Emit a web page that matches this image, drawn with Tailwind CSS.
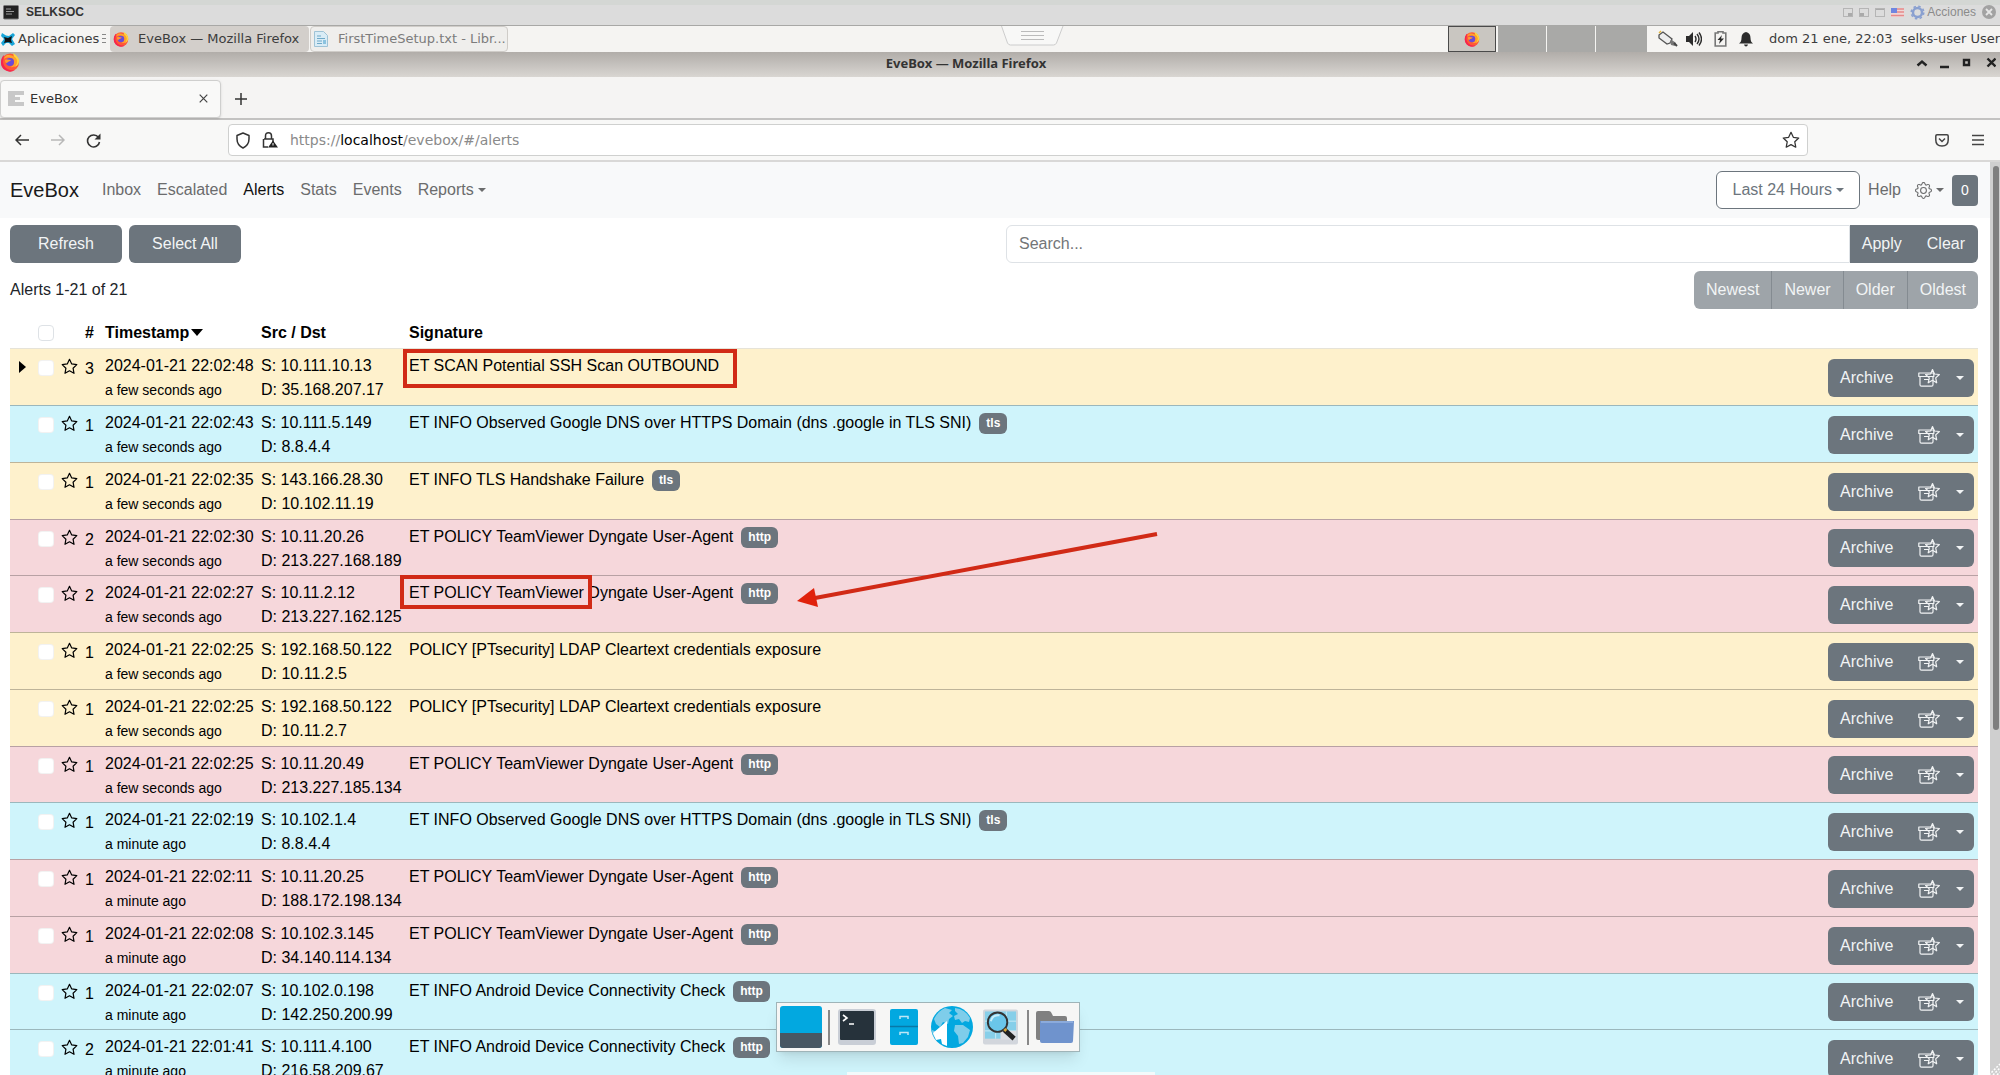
<!DOCTYPE html>
<html lang="es">
<head>
<meta charset="utf-8">
<title>SELKSOC</title>
<script src="https://cdn.jsdelivr.net/npm/@tailwindcss/browser@4"></script>
</head>
<body class="relative h-screen overflow-hidden flex flex-col bg-white font-['Liberation_Sans',sans-serif] text-base text-[#212529]">

<!-- shared icon symbols -->
<svg class="hidden">
  <symbol id="firefox" viewBox="0 0 20 20">
    <circle cx="10" cy="10.500" r="9" fill="#ff5a36"/>
    <path d="M1 10a9 9 0 0 0 14 8c-5 1-11-1-12-8L4 3C2 5 1 7 1 10z" fill="#f5254f"/>
    <path d="M13 1c1 2 0 3 2 5 2 2 2 7-1 9 4-1 5.500-4 5-7-.5-3-3-5-6-7z" fill="#ffd53d"/>
    <path d="M7 3c-2 1-3 3-3 4 2-2 6-2 9 0 2 3 1 7-3 8 5 1 8-3 7-7-1-3-4-5-10-5z" fill="#ffa32b"/>
    <circle cx="10" cy="10" r="4" fill="#6a4bd8"/>
    <path d="M5 8c2-1 4 0 6 0-1 2-3 1-4 3-2 0-2-2-2-3z" fill="#ff9a2e"/>
  </symbol>
  <symbol id="star" viewBox="0 0 20 20"><path d="M10 1.500l2.600 5.500 6 .8-4.400 4.200 1.100 6-5.300-2.900L4.700 18l1.100-6L1.400 7.800l6-.8z" fill="none" stroke="currentColor" stroke-width="1.400" stroke-linejoin="round"/></symbol>
  <symbol id="archive-star" viewBox="0 0 22 20">
    <g fill="none" stroke="currentColor" stroke-width="1.200" stroke-linejoin="round">
      <path d="M.8 5h15v3.500H.8zM2 8.500v8.200q0 1.500 1.500 1.500h10q1.500 0 1.500-1.500V8.500M6 11.500h5"/>
      <path d="M14.500 1.500l1.900 4.500 5 .5-3.700 3.400 1 4.900-4.200-2.500-4.300 2.500 1.100-4.900L7.600 6.500l5-.5z"/>
    </g>
  </symbol>
</svg>

<!-- virtual machine bar -->
<header class="flex h-[26px] shrink-0 items-end justify-between border-b border-t-[5px] border-t-[#d4d7d4] border-b-[#a8a8a6] bg-[#dcdcdc] pl-[3px] pr-1">
  <div class="flex h-5 items-start gap-[7px]">
    <svg class="h-[15px] w-4" viewBox="0 0 16 15"><rect x=".5" y=".5" width="15" height="13.500" rx="1" fill="#222" stroke="#777"/><path d="M3 4h5M3 6.500h8M3 9h6" stroke="#999"/></svg>
    <span class="text-xs leading-[14px] font-bold text-[#333]">SELKSOC</span>
  </div>
  <div class="flex h-5 items-start gap-[6px] text-[#8b8b8b]">
    <svg class="mt-[3px] h-[9px] w-[10px]" viewBox="0 0 10 9"><rect x=".5" y=".5" width="9" height="8" fill="none" stroke="#b5b5b5"/><path d="M5 5h4v3H5z" fill="#aaa"/></svg>
    <svg class="mt-[3px] h-[9px] w-[10px]" viewBox="0 0 10 9"><rect x=".5" y=".5" width="9" height="8" fill="none" stroke="#b5b5b5"/><path d="M1 5h4v3H1z" fill="#aaa"/></svg>
    <svg class="mt-[3px] h-[9px] w-[10px]" viewBox="0 0 10 9"><rect x=".5" y=".5" width="9" height="8" fill="none" stroke="#b5b5b5"/><path d="M1 1h8v1H1z" fill="#aaa"/></svg>
    <svg class="mt-[3px] h-[9px] w-[13px]" viewBox="0 0 13 9"><path d="M0 0h13v9H0z" fill="#f0d6d6"/><path d="M0 1h13M0 4h13M0 7.500h13" stroke="#e58a8a" stroke-width="1.300"/><path d="M0 0h6v5H0z" fill="#6f86e0"/></svg>
    <svg class="h-[15px] w-[15px]" viewBox="0 0 15 15"><circle cx="7.500" cy="7.500" r="4.500" fill="none" stroke="#8aa0d0" stroke-width="2.500"/><circle cx="7.500" cy="7.500" r="6.300" fill="none" stroke="#8aa0d0" stroke-width="1.500" stroke-dasharray="2.500 2.450"/></svg>
    <button class="-ml-1 text-xs leading-[15px]">Acciones</button>
    <svg class="h-[14px] w-[14px]" viewBox="0 0 14 14"><circle cx="7" cy="7" r="7" fill="#a2a2a2"/><path d="M4 4l6 6M10 4l-6 6" stroke="#e6e6e6" stroke-width="1.800"/></svg>
  </div>
</header>

<!-- desktop panel -->
<div class="relative flex h-[26px] shrink-0 items-stretch bg-[#f5f4f2] font-['DejaVu_Sans',sans-serif] text-[13px] text-[#3c3c3c]">
  <button class="flex w-[110px] items-center gap-[3px] pl-px">
    <svg class="h-[15px] w-[14px] shrink-0" viewBox="0 0 14 15"><path d="M1 1l4 2.500 3 .5 4-3 2 2-3 4 3 5-3 2-3-3H5l-3 3-2-3 3-4L0 4z" fill="#18a5d8"/><path d="M3 5l4 1 4-2-1 4 1 3-4-1-4 1 1-3z" fill="#111"/></svg>
    <span>Aplicaciones</span>
    <svg class="h-[10px] w-1 shrink-0" viewBox="0 0 4 10"><path d="M0 .5h4M0 4.500h4M0 8.500h4" stroke="#888"/></svg>
  </button>
  <button class="flex w-[199px] items-center gap-[9px] rounded bg-[#d3cfcb] pl-[3px] whitespace-nowrap"><svg class="h-4 w-4 shrink-0"><use href="#firefox"/></svg>EveBox — Mozilla Firefox</button>
  <button class="ml-px flex w-[198px] items-center gap-[10px] rounded border border-[#cfccc8] bg-[#efeeec] pl-[3px] whitespace-nowrap text-[#7c7c7c]">
    <svg class="h-4 w-[14px] shrink-0" viewBox="0 0 14 16"><path d="M.5.5h9l4 4v11H.5z" fill="#d9ecf6" stroke="#9fc3d6"/><path d="M3 5h4M3 7.500h8M3 10h5M3 12.500h5" stroke="#6fa9c8"/><path d="M9 9h3v4H9z" fill="#8cc3df"/></svg>
    FirstTimeSetup.txt - Libr...</button>
  <svg class="absolute left-[1001px] top-0 h-5 w-[63px]" viewBox="0 0 63 20"><path d="M.5 0l6 17q1 2 3 2h43q2 0 3-2l6.500-17" fill="#f8f8f7" stroke="#ccc"/><path d="M20 5.500h23M20 9.500h23M20 13.500h23" stroke="#bbb"/></svg>
  <div class="ml-auto flex">
    <div class="flex w-12 items-center justify-center border border-[#4a4a4a] bg-[#c9c6c1]"><svg class="h-4 w-4"><use href="#firefox"/></svg></div>
    <div class="ml-0.5 w-12 bg-[#a9a9a7]"></div>
    <div class="ml-px w-12 bg-[#a9a9a7]"></div>
    <div class="ml-px w-[51px] bg-[#a9a9a7]"></div>
    <div class="flex w-[353px] items-center whitespace-nowrap pl-[10px]">
      <svg class="h-[18px] w-[21px] shrink-0" viewBox="0 0 21 18"><path d="M2 5l4-3 9 7-2 4-3 1-8-6z" fill="#eee" stroke="#555" stroke-width="1.300"/><path d="M13 11l2-1 4 3-1 3-4-1z" fill="#777"/><path d="M2 3l2-2" stroke="#e5b83c" stroke-width="1.500"/><path d="M17 13l3 3" stroke="#444" stroke-width="2"/></svg>
      <svg class="ml-2 h-4 w-4 shrink-0" viewBox="0 0 16 16"><path d="M0 5h3l4-4v14l-4-4H0z" fill="#2c2c2c"/><path d="M9 5q2 3 0 6M11 3q4 5 0 10M13 1.500q5 6.500 0 13" fill="none" stroke="#2c2c2c" stroke-width="1.400"/></svg>
      <svg class="ml-3 h-4 w-[13px] shrink-0" viewBox="0 0 13 16"><path d="M4 2V.8h5V2h2.800v13H1.200V2z" fill="none" stroke="#777" stroke-width="1.600"/><path d="M8 4L3.500 9H6l-1 4 5-5.500H7z" fill="#2c2c2c"/></svg>
      <svg class="ml-3 h-4 w-[14px] shrink-0" viewBox="0 0 14 16"><path d="M7 1q4.500 1 4.500 6 0 4 2.500 5.500H0Q2.500 11 2.500 7 2.500 2 7 1zM5 13.500h4q-.5 2-2 2t-2-2z" fill="#2c2c2c"/></svg>
      <span class="ml-4">dom 21 ene, 22:03</span><span class="ml-2">selks-user User</span>
    </div>
  </div>
</div>

<!-- window title bar -->
<div class="relative flex h-[25px] shrink-0 items-start bg-linear-to-b from-[#b1ada9] to-[#d9d6d2]">
  <svg class="h-5 w-5 shrink-0"><use href="#firefox"/></svg>
  <div class="-ml-5 flex-1 pr-[68px] text-center font-['Noto_Sans',sans-serif] text-[13px] leading-[22px] font-bold text-[#333]">EveBox — Mozilla Firefox</div>
  <svg class="absolute right-1 top-[5px] h-3 w-20" viewBox="0 0 80 12"><g fill="none" stroke="#222" stroke-width="2.400"><path d="M1.500 8.500l4.500-4 4.500 4M24 10h9M48 3h5v5h-5zM71.500 1.500l8 8M79.500 1.500l-8 8"/></g></svg>
</div>

<!-- browser tabs -->
<div class="flex h-[43px] shrink-0 items-center border-b-2 border-[#c3c2c1] bg-[#f5f4f3] pt-[2px] font-['DejaVu_Sans',sans-serif] text-[13px] text-[#333]">
  <div class="flex h-[38px] w-[221px] items-center rounded-sm border border-[#cfcfce] bg-[#f9f9f8] pl-[7px] pr-3 shadow-sm">
    <svg class="h-[15px] w-4" viewBox="0 0 16 15"><path d="M0 0h16v4H7v2h5v3H7v2h9v4H0z" fill="#c8c8c8"/></svg>
    <span class="ml-[6px]">EveBox</span>
    <button class="ml-auto" aria-label="Close tab"><svg class="h-[9px] w-[9px]" viewBox="0 0 9 9"><path d="M.7.7l7.600 7.600M8.300.7L.7 8.300" stroke="#444" stroke-width="1.200"/></svg></button>
  </div>
  <button class="ml-[14px]" aria-label="New tab"><svg class="h-3 w-3" viewBox="0 0 12 12"><path d="M6 0v12M0 6h12" stroke="#333" stroke-width="1.500"/></svg></button>
</div>

<!-- browser toolbar -->
<div class="flex h-[42px] shrink-0 items-center border-b-2 border-[#d9d8d7] bg-[#f8f8f7] px-4 pl-[15px] text-[#333]">
  <button aria-label="Back"><svg class="h-3 w-[14px]" viewBox="0 0 14 12"><path d="M14 6H1M6 1L1 6l5 5" fill="none" stroke="currentColor" stroke-width="1.500"/></svg></button>
  <button class="ml-[22px] text-[#b8b8b8]" aria-label="Forward"><svg class="h-3 w-[14px]" viewBox="0 0 14 12"><path d="M0 6h13M8 1l5 5-5 5" fill="none" stroke="currentColor" stroke-width="1.500"/></svg></button>
  <button class="ml-[21px]" aria-label="Reload"><svg class="h-[15px] w-[15px]" viewBox="0 0 15 15"><path d="M12.500 4.500A6 6 0 1 0 13.500 9" fill="none" stroke="currentColor" stroke-width="1.600"/><path d="M14.500.5v6h-6z" fill="currentColor"/></svg></button>
  <div class="ml-[127px] mr-[127px] flex h-8 flex-1 items-center rounded border border-[#cfd0cf] bg-white px-[7px]">
    <svg class="h-[17px] w-[14px] shrink-0" viewBox="0 0 14 17"><path d="M7 1l6 2.500v3.500q0 6-6 9-6-3-6-9V3.500z" fill="none" stroke="#333" stroke-width="1.500" stroke-linejoin="round"/></svg>
    <svg class="ml-3 h-4 w-4 shrink-0" viewBox="0 0 16 16"><path d="M2 7h9v3M6 15H1.500V7M3.500 7V4q0-3.200 3-3.200T9.500 4v3" fill="none" stroke="#333" stroke-width="1.500"/><path d="M11 8.500l5 7H6z" fill="#222"/><path d="M11 11v2.500" stroke="#fff"/></svg>
    <div role="textbox" aria-label="Address" contenteditable="true" spellcheck="false" class="ml-3 flex-1 font-['DejaVu_Sans',sans-serif] text-sm text-[#8a8a8a]">https://<span class="text-black">localhost</span>/evebox/#/alerts</div>
    <button aria-label="Bookmark"><svg class="block h-[18px] w-[18px]"><use href="#star"/></svg></button>
  </div>
  <button aria-label="Pocket"><svg class="h-[13px] w-[14px]" viewBox="0 0 14 13"><path d="M2 .8h10q1.200 0 1.200 1.200v4q0 6-6.200 6T.8 6V2Q.8.8 2 .8zM4 4.500l3 3 3-3" fill="none" stroke="#444" stroke-width="1.500"/></svg></button>
  <button class="ml-[23px]" aria-label="Menu"><svg class="h-3 w-3" viewBox="0 0 12 12"><path d="M0 1.500h12M0 6h12M0 10.500h12" stroke="#444" stroke-width="1.400"/></svg></button>
</div>

<!-- page -->
<div class="flex min-h-0 flex-1 overflow-hidden">
  <div class="min-w-0 flex-1">
    <nav class="flex h-14 items-center gap-4 bg-[#f8f9fa] px-[10px] pr-3 text-[#6b6c6d]">
      <a href="#" class="mr-[7px] text-xl text-[#1a1a1a]">EveBox</a>
      <a href="#">Inbox</a>
      <a href="#">Escalated</a>
      <a href="#" class="text-[#111]">Alerts</a>
      <a href="#">Stats</a>
      <a href="#">Events</a>
      <a href="#" class="flex items-center gap-1">Reports<span class="border-x-4 border-t-4 border-x-transparent border-t-current"></span></a>
      <div class="ml-auto flex items-center">
        <button class="flex h-[38px] items-center gap-1 rounded-md border border-[#6c757d] bg-white px-[15px] text-[#6c757d]">Last 24 Hours<span class="border-x-4 border-t-4 border-x-transparent border-t-current"></span></button>
        <a href="#" class="ml-2">Help</a>
        <button class="ml-[14px] flex items-center gap-1" aria-label="Settings">
          <svg class="h-[17px] w-[17px]" viewBox="0 0 16 16" fill="#6b6c6d"><path d="M8 4.754a3.246 3.246 0 1 0 0 6.492 3.246 3.246 0 0 0 0-6.492zM5.754 8a2.246 2.246 0 1 1 4.492 0 2.246 2.246 0 0 1-4.492 0z"/><path d="M9.796 1.343c-.527-1.790-3.065-1.790-3.592 0l-.094.319a.873.873 0 0 1-1.255.52l-.292-.16c-1.640-.892-3.433.902-2.540 2.541l.159.292a.873.873 0 0 1-.52 1.255l-.319.094c-1.790.527-1.790 3.065 0 3.592l.319.094a.873.873 0 0 1 .52 1.255l-.16.292c-.892 1.640.901 3.434 2.541 2.540l.292-.159a.873.873 0 0 1 1.255.52l.094.319c.527 1.790 3.065 1.790 3.592 0l.094-.319a.873.873 0 0 1 1.255-.52l.292.16c1.640.893 3.434-.902 2.540-2.541l-.159-.292a.873.873 0 0 1 .52-1.255l.319-.094c1.790-.527 1.790-3.065 0-3.592l-.319-.094a.873.873 0 0 1-.52-1.255l.16-.292c.893-1.640-.902-3.433-2.541-2.540l-.292.159a.873.873 0 0 1-1.255-.52l-.094-.319zm-2.633.283c.246-.835 1.428-.835 1.674 0l.094.319a1.873 1.873 0 0 0 2.693 1.115l.291-.16c.764-.415 1.600.42 1.184 1.185l-.159.292a1.873 1.873 0 0 0 1.116 2.692l.318.094c.835.246.835 1.428 0 1.674l-.319.094a1.873 1.873 0 0 0-1.115 2.693l.16.291c.415.764-.42 1.600-1.185 1.184l-.291-.159a1.873 1.873 0 0 0-2.693 1.116l-.094.318c-.246.835-1.428.835-1.674 0l-.094-.319a1.873 1.873 0 0 0-2.692-1.115l-.292.16c-.764.415-1.600-.42-1.184-1.185l.159-.291A1.873 1.873 0 0 0 1.945 8.930l-.319-.094c-.835-.246-.835-1.428 0-1.674l.319-.094A1.873 1.873 0 0 0 3.060 4.377l-.16-.292c-.415-.764.42-1.600 1.185-1.184l.292.159a1.873 1.873 0 0 0 2.692-1.115l.094-.319z"/></svg>
          <span class="border-x-4 border-t-4 border-x-transparent border-t-current"></span>
        </button>
        <button class="ml-2 h-[31px] w-[26px] rounded bg-[#6c757d] text-sm text-white">0</button>
      </div>
    </nav>

    <main class="pl-[10px] pr-3 pt-[7px]">
      <div class="flex gap-2">
        <div class="flex flex-1 gap-[7px]">
          <button class="h-[38px] w-28 rounded-md bg-[#6c757d] text-[#f2f4f5]">Refresh</button>
          <button class="h-[38px] w-28 rounded-md bg-[#6c757d] text-[#f2f4f5]">Select All</button>
        </div>
        <form class="flex w-[972px]">
          <input type="text" aria-label="Search" placeholder="Search..." class="h-[38px] min-w-0 flex-1 rounded-l-md border border-[#dee2e6] bg-white px-3 placeholder:text-[#737578]">
          <button type="button" class="bg-[#6c757d] px-3 text-[#f2f4f5]">Apply</button>
          <button type="button" class="rounded-r-md bg-[#6c757d] px-[13px] text-[#f2f4f5]">Clear</button>
        </form>
      </div>
      <div class="mt-2 flex items-center justify-between">
        <span>Alerts 1-21 of 21</span>
        <div class="flex h-[38px] divide-x divide-[#848b91] overflow-hidden rounded-md bg-[#9ea4a9] text-[#f2f4f5]">
          <button class="px-3">Newest</button><button class="px-3">Newer</button><button class="px-3">Older</button><button class="px-3">Oldest</button>
        </div>
      </div>

      <table class="mt-[7px] w-full table-fixed border-collapse text-black">
        <colgroup><col class="w-6"><col class="w-[23px]"><col class="w-6"><col class="w-5"><col class="w-[156px]"><col class="w-[148px]"><col><col class="w-[154px]"></colgroup>
        <thead>
          <tr class="h-8 border-b border-[#e6e3d8] text-left leading-6">
            <th></th>
            <th class="px-1 pt-0.5"><input type="checkbox" aria-label="Select all alerts" class="block h-4 w-4 appearance-none rounded border border-[#dee2e6] bg-white"></th>
            <th></th><th class="pl-1 pt-0.5">#</th>
            <th class="px-1 pt-0.5"><div class="flex items-center gap-[2px]">Timestamp<span class="border-x-[6px] border-t-[7px] border-x-transparent border-t-black"></span></div></th>
            <th class="px-1 pt-0.5">Src / Dst</th><th class="px-1 pt-0.5">Signature</th><th></th>
          </tr>
        </thead>
        <tbody id="alerts"></tbody>
      </table>
    </main>
  </div>
  <div class="w-[10px] bg-[#cfcfcf] pl-[3px] pt-1"><div class="h-[62%] w-[6px] rounded-full bg-[#7f7f7f]"></div></div>
</div>

<!-- annotations drawn over the page -->
<div class="absolute left-[403px] top-[349px] h-[39px] w-[334px] border-4 border-[#d12a16]"></div>
<div class="absolute left-[400px] top-[575px] h-[34px] w-[192px] border-4 border-[#d12a16]"></div>
<svg class="absolute left-[797px] top-[530px] h-20 w-[364px]" viewBox="0 0 364 80"><path d="M360 4L18 68" stroke="#d12a16" stroke-width="4"/><path d="M0 71l17-13 4 19z" fill="#e0220c"/></svg>

<!-- window resize grip -->
<svg class="absolute bottom-0 right-0 h-3 w-3" viewBox="0 0 12 12"><path d="M1 12L12 1M5 12l7-7M9 12l3-3" stroke="#fff" stroke-width="1.500" stroke-dasharray="2 1.500"/></svg>

<!-- dock -->
<div class="absolute left-[776px] top-[1002px] flex h-[50px] w-[304px] items-center border border-[#9fb4b8] bg-[#f6f6f5] pl-[3px] shadow-lg">
  <svg class="h-[42px] w-[42px]" viewBox="0 0 42 42"><rect width="42" height="42" rx="3" fill="#02a8e0"/><path d="M0 27h42v12q0 3-3 3H3q-3 0-3-3z" fill="#485763"/></svg>
  <div class="ml-[6px] h-[35px] w-[2px] bg-[#888]"></div>
  <svg class="ml-2 h-9 w-[38px]" viewBox="0 0 38 36"><rect width="38" height="36" rx="3" fill="#c9ced6"/><rect x="2" y="2" width="34" height="29" rx="1" fill="#26323b"/><path d="M5 6l4 3-4 3M11 15h5" fill="none" stroke="#fff" stroke-width="1.600"/></svg>
  <svg class="ml-[14px] h-9 w-7" viewBox="0 0 28 36"><rect width="28" height="36" rx="2" fill="#02a8e0"/><path d="M0 17.500h28" stroke="#0879a8" stroke-width="1.500"/><path d="M10 10V7.500h8V10M10 26v-2.500h8V26" fill="none" stroke="#bfe6f5" stroke-width="1.500"/></svg>
  <svg class="ml-[13px] h-[42px] w-[42px]" viewBox="0 0 42 42"><circle cx="21" cy="21" r="21" fill="#02a8e0"/><path d="M3 13Q7 5 14 2l7 2-3 3 4 3-4 3-1 5-5-2-3 5-4-3zM24 2q10 1 15 10l-1 4-4-1-3 2-3-4-4 1-1-4 4-2-3-3zM24 19l8 0 7 5-2 7-5 6-4 1-1-8-4-5z" fill="#7ecdea"/><path d="M1 24l5 2 1 6-2 1Q1 29 1 24z" fill="#7ecdea"/><path d="M16 15v25l-5-2-1-5-5 1-3-7z" fill="#fff"/></svg>
  <svg class="ml-[10px] h-9 w-[35px]" viewBox="0 0 36 36"><rect width="36" height="36" rx="2" fill="#d2d6dc"/><rect x="2" y="2" width="32" height="28" fill="#87cfe9"/><path d="M2 12h32M2 22h32M13 2v28M24 2v28" stroke="#c8eaf6"/><path d="M18 22h16v9H18z" fill="#dcdfe3"/><circle cx="15" cy="13" r="10" fill="#6ac6ea" stroke="#333" stroke-width="2"/><path d="M8 12q2-7 9-6" fill="none" stroke="#c7edfa" stroke-width="2"/><path d="M22 21l10 9" stroke="#222" stroke-width="5"/><path d="M22 20l2 2" stroke="#d6a63c" stroke-width="3"/></svg>
  <div class="ml-[9px] h-[35px] w-[2px] bg-[#888]"></div>
  <svg class="ml-[7px] h-8 w-[38px]" viewBox="0 0 38 32"><path d="M0 2q0-2 2-2h11q2 0 3 3l1 2h12q2 0 2 2v22H2q-2 0-2-2z" fill="#808080"/><path d="M4 10h34l-1 20q0 2-2 2H6q-2 0-2-2z" fill="#6f93cd"/><path d="M5 11h32" stroke="#a8c2ea"/></svg>
</div>
<div class="absolute bottom-0 left-[847px] h-[3px] w-[308px] bg-[#f3fafb]"></div>

<script>
  const few = 'a few seconds ago', minute = 'a minute ago';
  const tv = 'ET POLICY TeamViewer Dyngate User-Agent';
  const dns = 'ET INFO Observed Google DNS over HTTPS Domain (dns .google in TLS SNI)';
  const ldap = 'POLICY [PTsecurity] LDAP Cleartext credentials exposure';
  const android = 'ET INFO Android Device Connectivity Check';
  const colors = { y: 'bg-[#fef1cc]', c: 'bg-[#cff4fb]', p: 'bg-[#f6d7db]' };
  const alerts = [
    ['y', 3, '22:02:48', few, '10.111.10.13', '35.168.207.17', 'ET SCAN Potential SSH Scan OUTBOUND', ''],
    ['c', 1, '22:02:43', few, '10.111.5.149', '8.8.4.4', dns, 'tls'],
    ['y', 1, '22:02:35', few, '143.166.28.30', '10.102.11.19', 'ET INFO TLS Handshake Failure', 'tls'],
    ['p', 2, '22:02:30', few, '10.11.20.26', '213.227.168.189', tv, 'http'],
    ['p', 2, '22:02:27', few, '10.11.2.12', '213.227.162.125', tv, 'http'],
    ['y', 1, '22:02:25', few, '192.168.50.122', '10.11.2.5', ldap, ''],
    ['y', 1, '22:02:25', few, '192.168.50.122', '10.11.2.7', ldap, ''],
    ['p', 1, '22:02:25', few, '10.11.20.49', '213.227.185.134', tv, 'http'],
    ['c', 1, '22:02:19', minute, '10.102.1.4', '8.8.4.4', dns, 'tls'],
    ['p', 1, '22:02:11', minute, '10.11.20.25', '188.172.198.134', tv, 'http'],
    ['p', 1, '22:02:08', minute, '10.102.3.145', '34.140.114.134', tv, 'http'],
    ['c', 1, '22:02:07', minute, '10.102.0.198', '142.250.200.99', android, 'http'],
    ['c', 2, '22:01:41', minute, '10.111.4.100', '216.58.209.67', android, 'http'],
  ];
  document.getElementById('alerts').innerHTML = alerts.map(([color, count, time, ago, src, dst, sig, proto], i) => `
    <tr class="h-[57px] border-b border-black/25 align-top leading-6 whitespace-nowrap nth-[4n]:h-14 ${colors[color]}">
      <td class="pl-[9px] pt-3">${i === 0 ? '<span class="block w-0 border-y-[6px] border-l-[7px] border-y-transparent border-l-black"></span>' : ''}</td>
      <td class="px-1 pt-[11px]"><input type="checkbox" aria-label="Select alert ${i + 1}" class="block h-4 w-4 appearance-none rounded border border-black/5 bg-white"></td>
      <td class="px-1 pt-[9px]"><button class="block" aria-label="Escalate"><svg class="h-[17px] w-[17px]"><use href="#star"/></svg></button></td>
      <td class="pl-1 pt-2">${count}</td>
      <td class="px-1 pt-[5px]">2024-01-21 ${time}<div class="text-sm leading-6">${ago}</div></td>
      <td class="px-1 pt-[5px]">S: ${src}<div class="leading-6">D: ${dst}</div></td>
      <td class="px-1 pt-[5px]"><div class="flex h-6 items-center gap-2"><span>${sig}</span>${proto ? `<span class="mt-0.5 rounded-md bg-[#6c757d] px-[7px] py-1 text-xs leading-[13px] font-bold text-white">${proto}</span>` : ''}</div></td>
      <td class="px-1 pt-[2px] align-middle"><div class="flex h-[38px] items-center rounded-md bg-[#6c757d] text-[#f2f4f5]">
        <button class="pl-3">Archive</button>
        <button class="ml-[25px]" aria-label="Archive and escalate"><svg class="block h-5 w-[22px]"><use href="#archive-star"/></svg></button>
        <button class="ml-4 py-2" aria-label="More"><span class="block border-x-4 border-t-4 border-x-transparent border-t-current"></span></button>
      </div></td>
    </tr>`).join('');
</script>
</body>
</html>
